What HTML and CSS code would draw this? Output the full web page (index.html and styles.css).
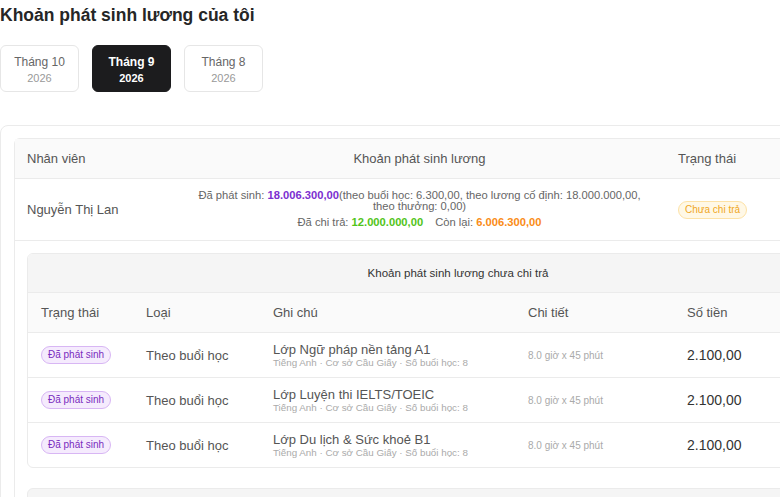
FILE: index.html
```html
<!doctype html>
<html lang="vi">
<head>
    <meta charset="UTF-8">
    <meta name="viewport" content="width=device-width, initial-scale=1.0">
    <title>Khoản phát sinh lương của tôi</title>
    <link rel="stylesheet" href="styles.css">
</head>
<body>
    <h1 class="page-title">Khoản phát sinh lương của tôi</h1>

    <div class="months">
        <div class="month">
            <div class="month-name">Tháng 10</div>
            <div class="month-year">2026</div>
        </div>
        <div class="month active">
            <div class="month-name">Tháng 9</div>
            <div class="month-year">2026</div>
        </div>
        <div class="month">
            <div class="month-name">Tháng 8</div>
            <div class="month-year">2026</div>
        </div>
    </div>

    <div class="card">
        <table class="salary">
            <thead>
                <tr>
                    <th class="col-name">Nhân viên</th>
                    <th class="col-sum">Khoản phát sinh lương</th>
                    <th class="col-status">Trạng thái</th>
                </tr>
            </thead>
            <tbody>
                <tr class="main-row">
                    <td>Nguyễn Thị Lan</td>
                    <td class="sum">
                        <div class="sum-line">Đã phát sinh: <b class="purple">18.006.300,00</b>(theo buổi học: 6.300,00, theo lương cố định: 18.000.000,00,<br>theo thưởng: 0,00)</div>
                        <div class="sum-paid">Đã chi trả: <b class="green">12.000.000,00</b><span class="gap"></span>Còn lại: <b class="orange">6.006.300,00</b></div>
                    </td>
                    <td><span class="tag tag-wait">Chưa chi trả</span></td>
                </tr>
                <tr class="detail-row">
                    <td colspan="3">
                        <div class="sub">
                            <div class="sub-title">Khoản phát sinh lương chưa chi trả</div>
                            <table class="items">
                                <thead>
                                    <tr>
                                        <th class="c1">Trạng thái</th>
                                        <th class="c2">Loại</th>
                                        <th class="c3">Ghi chú</th>
                                        <th class="c4">Chi tiết</th>
                                        <th class="c5">Số tiền</th>
                                    </tr>
                                </thead>
                                <tbody>
                                    <tr>
                                        <td><span class="tag tag-done">Đã phát sinh</span></td>
                                        <td>Theo buổi học</td>
                                        <td>
                                            <div class="note">Lớp Ngữ pháp nền tảng A1</div>
                                            <div class="note-sub">Tiếng Anh · Cơ sở Cầu Giấy · Số buổi học: 8</div>
                                        </td>
                                        <td class="detail">8.0 giờ x 45 phút</td>
                                        <td class="amount">2.100,00</td>
                                    </tr>
                                    <tr>
                                        <td><span class="tag tag-done">Đã phát sinh</span></td>
                                        <td>Theo buổi học</td>
                                        <td>
                                            <div class="note">Lớp Luyện thi IELTS/TOEIC</div>
                                            <div class="note-sub">Tiếng Anh · Cơ sở Cầu Giấy · Số buổi học: 8</div>
                                        </td>
                                        <td class="detail">8.0 giờ x 45 phút</td>
                                        <td class="amount">2.100,00</td>
                                    </tr>
                                    <tr>
                                        <td><span class="tag tag-done">Đã phát sinh</span></td>
                                        <td>Theo buổi học</td>
                                        <td>
                                            <div class="note">Lớp Du lịch &amp; Sức khoẻ B1</div>
                                            <div class="note-sub">Tiếng Anh · Cơ sở Cầu Giấy · Số buổi học: 8</div>
                                        </td>
                                        <td class="detail">8.0 giờ x 45 phút</td>
                                        <td class="amount">2.100,00</td>
                                    </tr>
                                </tbody>
                            </table>
                        </div>
                        <div class="sub sub-empty"></div>
                    </td>
                </tr>
            </tbody>
        </table>
    </div>
</body>
</html>
```

FILE: styles.css
```css
html, body {
    overflow: hidden;
}
body {
    margin: 0;
    font-family: "Liberation Sans", Arial, sans-serif;
    color: #555;
    background: #fff;
}
.page-title {
    margin: 0;
    font-size: 17.5px;
    line-height: 30px;
    font-weight: bold;
    color: #262626;
}
.months {
    display: flex;
    gap: 13px;
    margin-top: 15px;
}
.month {
    width: 79px;
    box-sizing: border-box;
    padding: 7px 0 6px;
    border: 1px solid #e6e6e6;
    border-radius: 6px;
    text-align: center;
}
.month-name {
    font-size: 12px;
    line-height: 18px;
    color: #666;
}
.month-year {
    font-size: 11px;
    line-height: 14px;
    color: #999;
}
.month.active {
    background: #1c1c1e;
    border-color: #1c1c1e;
}
.month.active .month-name,
.month.active .month-year {
    color: #fff;
    font-weight: bold;
}

.card {
    margin-top: 33px;
    width: 940px;
    padding: 12px 13px;
    border: 1px solid #ebebeb;
    border-radius: 8px;
}
table {
    border-collapse: separate;
    border-spacing: 0;
}
.salary {
    width: 888px;
    table-layout: fixed;
    border: 1px solid #ebebeb;
    border-radius: 6px;
}
.salary th {
    height: 39px;
    padding: 0 12px;
    background: #fafafa;
    border-bottom: 1px solid #ebebeb;
    font-size: 13px;
    font-weight: normal;
    color: #555;
    text-align: left;
}
.salary th.col-sum {
    text-align: center;
}
.col-name { width: 158px; box-sizing: border-box; }
.col-sum { width: 493px; box-sizing: border-box; }
.main-row td {
    height: 61px;
    padding: 0 12px;
    border-bottom: 1px solid #ebebeb;
    font-size: 13px;
    color: #555;
}
.main-row td.sum {
    text-align: center;
    font-size: 11.2px;
    color: #666;
}
.sum-line {
    line-height: 11px;
}
.sum-paid {
    margin-top: 3px;
    line-height: 14px;
}
.sum b {
    font-weight: bold;
}
.gap {
    display: inline-block;
    width: 12px;
}
.purple { color: #7c2fd0; }
.green { color: #52c41a; }
.orange { color: #fa8c16; }

.tag {
    display: inline-block;
    padding: 0 6px;
    border-radius: 10px;
    font-size: 10px;
    line-height: 16px;
}
.tag-wait {
    background: #fff8e6;
    border: 1px solid #fde2a6;
    color: #efa71f;
}
.tag-done {
    background: #f5ebfd;
    border: 1px solid #d8b6f4;
    color: #7a2bbd;
}

.detail-row td {
    padding: 12px;
}
.sub {
    border: 1px solid #ebebeb;
    border-radius: 6px;
    overflow: hidden;
    margin-bottom: 20px;
}
.sub-empty {
    height: 40px;
    background: #f5f5f5;
}
.sub-title {
    height: 38px;
    line-height: 38px;
    background: #f5f5f5;
    border-bottom: 1px solid #ebebeb;
    text-align: center;
    font-size: 11.5px;
    color: #333;
}
.items {
    width: 100%;
    table-layout: fixed;
}
.items th {
    height: 39px;
    padding: 0 13px;
    background: #fafafa;
    border-bottom: 1px solid #ebebeb;
    font-size: 13px;
    font-weight: normal;
    color: #555;
    text-align: left;
}
.items .c1 { width: 105px; box-sizing: border-box; }
.items .c2 { width: 127px; box-sizing: border-box; }
.items .c3 { width: 255px; box-sizing: border-box; }
.items .c4 { width: 159px; box-sizing: border-box; }
.items td {
    height: 44px;
    padding: 0 13px;
    border-bottom: 1px solid #ebebeb;
    font-size: 13px;
    color: #555;
}
.items tbody tr:last-child td {
    border-bottom: none;
}
.note {
    font-size: 13px;
    line-height: 15px;
    color: #555;
}
.note-sub {
    font-size: 9.8px;
    line-height: 12px;
    color: #aaa;
}
.items td.detail {
    font-size: 10px;
    color: #aaa;
}
.items td.amount {
    font-size: 14px;
    color: #333;
}
```
